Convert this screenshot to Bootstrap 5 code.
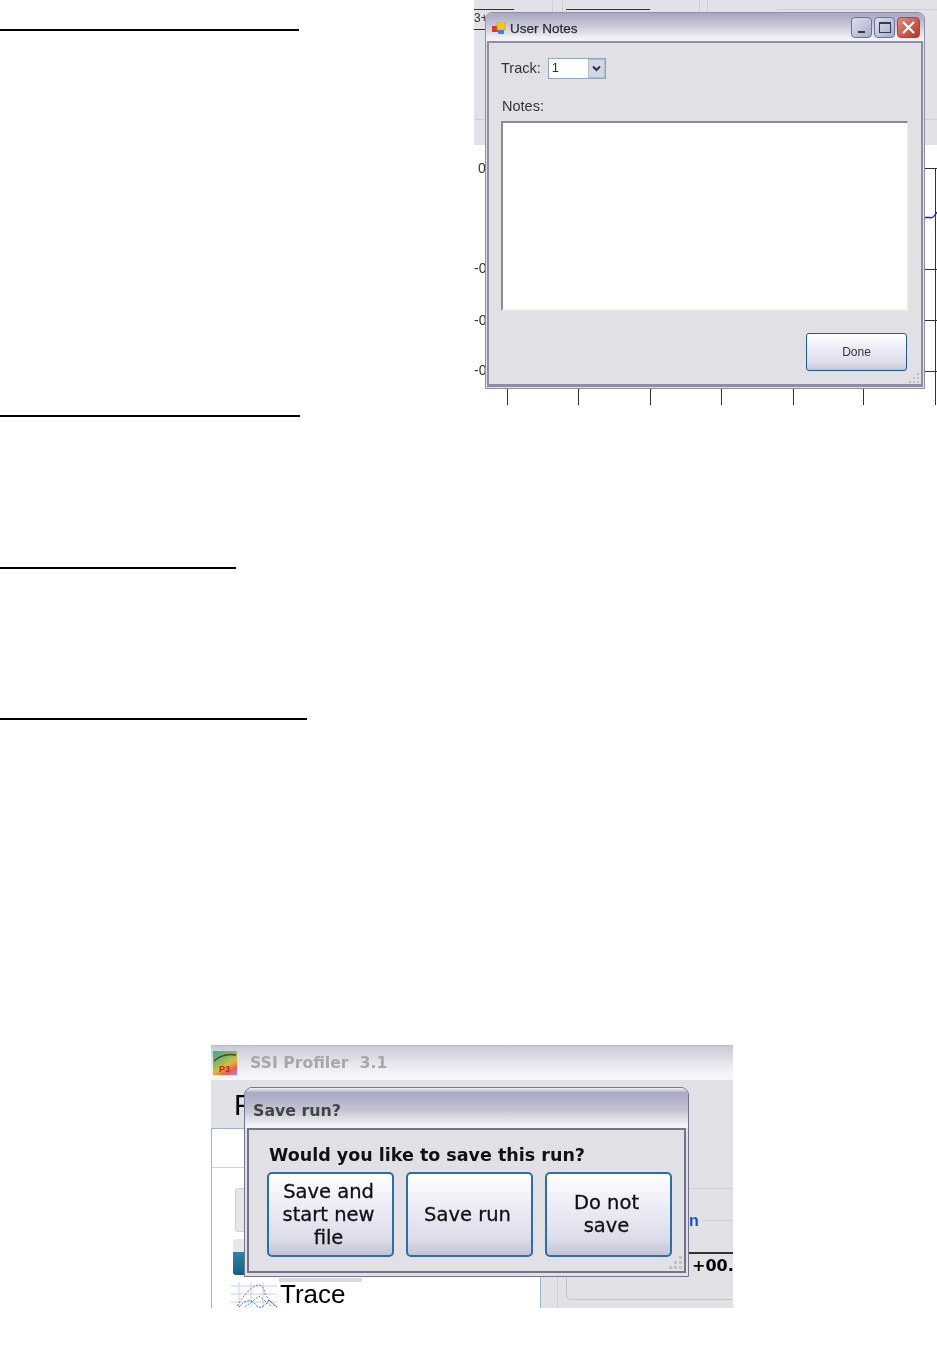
<!DOCTYPE html>
<html lang="en">
<head>
  <meta charset="UTF-8">
  <meta name="viewport" content="width=device-width, initial-scale=1">
  <title>SSI Profiler notes</title>
  <link href="https://cdn.jsdelivr.net/npm/bootstrap@5.3.0/dist/css/bootstrap.min.css" rel="stylesheet">
  <style>
    body { margin: 0; background: #fff; color: #000; font-family: "Liberation Sans", Arial, sans-serif; }
    .doc-page { width: 937px; height: 1358px; overflow: hidden; }
    .rule-line { height: 2px; background: #000; }
    .rule-one { width: 299px; margin-top: 29px; }
    .rule-two { width: 300px; margin-top: 384px; }
    .rule-three { width: 236px; margin-top: 150px; }
    .rule-four { width: 307px; margin-top: 149px; }
    .left-col { width: 474px; }

    /* top screenshot */
    .shot-top { width: 463px; height: 405px; position: relative; overflow: hidden; background: #fff; filter: blur(0.3px); }
    .shot-bg { position: absolute; left: 0; top: 0; right: 0; height: 145px; background: #e1e1e7; }
    .bit { position: absolute; }
    .bit-light { background: #cfcfd6; }
    .bit-dark { background: #333; }
    .axis-num { position: absolute; font-size: 14px; line-height: 16px; color: #333; }
    .win-notes { position: absolute; left: 11px; top: 12px; width: 440px; height: 377px; border-radius: 7px 7px 0 0; border: 1px solid #8f8fa6; background: #e0e0e5; }
    .win-title { height: 28px; background: linear-gradient(#a7a7c1, #c8c8d8 45%, #f3f3f7 92%); border-radius: 6px 6px 0 0; padding-left: 6px; }
    .win-icon { margin-top: 4px; }
    .win-title-text { font-size: 13.5px; color: #2a2a33; -webkit-text-stroke: 0.25px #2a2a33; margin-left: 4px; margin-top: 4px; }
    .win-client { height: 346px; margin: 0 1px; border: 2px solid #8d8da5; border-bottom-width: 3px; position: relative; font-size: 14.5px; color: #333; padding: 15px 12px 0 12px; }
    .track-select { width: 58px; height: 21px; border: 1px solid #8fa8c4; background: #fff; margin-left: 7px; font-size: 13px; line-height: 17px; padding-left: 3px; position: relative; }
    .track-arrow { position: absolute; right: 0; top: 0; bottom: 0; width: 17px; background: #d4d6e4; border: 1px solid #b4bcc9; display: flex; align-items: center; justify-content: center; }
    .notes-label { margin-top: 18px; margin-left: 1px; line-height: 17px; margin-bottom: 6px; }
    .notes-area { width: 407px; height: 190px; background: #fff; border: 2px solid; border-color: #8c8c8c #f2f1e6 #f2f1e6 #8c8c8c; border-right-width: 1px; }
    .xp-btn { background: linear-gradient(#fff, #eeeef8 35%, #dcdde9 80%, #c4c4d7); border: 1px solid #1d5b8e; border-radius: 3px; color: #111; padding: 0; }
    .xp-btn:hover { background: linear-gradient(#fff, #eeeef8 35%, #dcdde9 80%, #c4c4d7); color: #111; border-color: #1d5b8e; }
    .done-btn { position: absolute; right: 14px; bottom: 13px; width: 101px; height: 38px; font-size: 12px; color: #333; }
    .cap-btn { width: 21px; height: 21px; border-radius: 4px; border: 1px solid #6f7397; background: linear-gradient(135deg, #dfe0ec, #a8acc8); margin-left: 2px; position: relative; }
    .cap-close { width: 23px; background: linear-gradient(135deg, #e6887e, #b8322c); border-color: #a44; }
    .cap-min { position: absolute; left: 6px; bottom: 4px; width: 7px; height: 2px; background: #333a55; }
    .cap-max { position: absolute; left: 4px; top: 4px; width: 12px; height: 11px; border: 1px solid #333a55; border-top-width: 2px; }
    .grip { position: absolute; right: 1px; bottom: 0; }

    /* bottom screenshot */
    .shot-bottom { width: 522px; height: 263px; margin-left: 211px; margin-top: 325px; position: relative; overflow: hidden; background: #e1e1e6; filter: blur(0.35px); }
    .app-title { height: 35px; background: linear-gradient(#c9c9d9, #dedee8 35%, #f6f6f9 85%); border-top: 1px solid #b9b9cf; padding-left: 2px; }
    .app-title-text { margin-left: 13px; font-family: "DejaVu Sans", sans-serif; font-weight: 700; font-size: 15.7px; color: #a8a8a8; }
    .app-menu { height: 48px; font-size: 29px; padding-left: 23px; padding-top: 5px; line-height: 40px; }
    .app-body { height: 180px; }
    .app-left { width: 329px; background: #fff; border-left: 1px solid #9db4cf; border-top: 1px solid #9db4cf; position: relative; }
    .app-right { flex: 1; position: relative; border-left: 1px solid #9db4cf; }
    .trace-label { position: absolute; left: 68px; top: 153px; font-size: 26px; line-height: 25px; }
    .dlg { position: absolute; left: 33px; top: 42px; width: 445px; height: 190px; border: 1px solid #74748e; border-radius: 8px 8px 0 0; background: #e0e0e5; }
    .dlg-title { height: 40px; background: linear-gradient(#f2f2f5, #a9a9c2 12%, #c4c4d4 55%, #f4f4f7 95%); border-radius: 7px 7px 0 0; padding: 12px 0 0 8px; font-family: "DejaVu Sans", sans-serif; font-size: 15.8px; line-height: 22px; font-weight: 700; color: #444; }
    .dlg-client { height: 145px; margin: 0 2px; border: 2px solid #73738c; padding: 13px 13px 0 21px; position: relative; font-family: "DejaVu Sans", sans-serif; }
    .dlg-question { font-size: 17.5px; line-height: 24px; font-weight: 700; color: #111; margin-left: -1px; margin-bottom: 5px; white-space: nowrap; }
    .dlg-btn { width: 127px; height: 85px; flex-shrink: 0; font-size: 19.5px; line-height: 23px; padding: 0 4px 1px 0; border-width: 2px; border-radius: 5px; border-color: #2f6ea3; -webkit-text-stroke: 0.3px #111; }
    .dlg-grid { gap: 12px; margin-left: -3px; }
  </style>
</head>
<body>
<div class="doc-page">
  <div class="d-flex">
    <div class="left-col">
      <div class="rule-line rule-one"></div>
      <div class="rule-line rule-two"></div>
    </div>

    <div class="shot-top">
      <div class="shot-bg"></div>
      <div class="bit bit-light" style="left:78px;top:0;width:1px;height:12px"></div>
      <div class="bit bit-light" style="left:88px;top:0;width:1px;height:12px"></div>
      <div class="bit bit-light" style="left:225px;top:0;width:1px;height:12px"></div>
      <div class="bit bit-light" style="left:233px;top:0;width:1px;height:12px"></div>
      <div class="bit bit-light" style="left:303px;top:9px;width:160px;height:1px"></div>
      <div class="bit bit-light" style="left:0;top:119px;width:12px;height:1px"></div>
      <div class="bit bit-light" style="left:450px;top:119px;width:13px;height:1px"></div>
      <div class="bit bit-dark" style="left:0;top:9px;width:40px;height:1px"></div>
      <div class="bit bit-dark" style="left:92px;top:9px;width:84px;height:1px"></div>
      <div class="bit bit-dark" style="left:0;top:29px;width:12px;height:1px"></div>
      <div class="axis-num" style="left:0;top:10px;font-size:12px">3+</div>

      <div class="axis-num" style="left:4px;top:160px">0</div>
      <div class="axis-num" style="left:0;top:260px">-0</div>
      <div class="axis-num" style="left:0;top:312px">-0</div>
      <div class="axis-num" style="left:0;top:362px">-0</div>

      <div class="bit bit-dark" style="left:451px;top:168px;width:12px;height:1px"></div>
      <div class="bit bit-dark" style="left:451px;top:269px;width:12px;height:1px"></div>
      <div class="bit bit-dark" style="left:451px;top:320px;width:12px;height:1px"></div>
      <div class="bit bit-dark" style="left:451px;top:371px;width:12px;height:1px"></div>
      <div class="bit bit-dark" style="left:461px;top:168px;width:1px;height:237px"></div>
      <svg class="bit" style="left:451px;top:208px" width="12" height="14" viewBox="0 0 12 14"><path d="M0 9.5H5Q8 11 12 4" fill="none" stroke="#1a1ae0" stroke-width="1.4"/></svg>

      <div class="bit bit-dark" style="left:33px;top:388px;width:1px;height:17px"></div>
      <div class="bit bit-dark" style="left:104px;top:388px;width:1px;height:17px"></div>
      <div class="bit bit-dark" style="left:176px;top:388px;width:1px;height:17px"></div>
      <div class="bit bit-dark" style="left:247px;top:388px;width:1px;height:17px"></div>
      <div class="bit bit-dark" style="left:319px;top:388px;width:1px;height:17px"></div>
      <div class="bit bit-dark" style="left:389px;top:388px;width:1px;height:17px"></div>

      <div class="win-notes">
        <div class="win-title d-flex align-items-center">
          <svg class="win-icon" width="14" height="14" viewBox="0 0 14 14">
            <rect x="0" y="4" width="6" height="6" fill="#d8382e"/>
            <rect x="5" y="0" width="8" height="8" fill="#f4c430" stroke="#b98f1c" stroke-width=".5"/>
            <rect x="6" y="8" width="6" height="4" fill="#4a80dc"/>
          </svg>
          <span class="win-title-text">User Notes</span>
          <div class="d-flex ms-auto me-1">
            <div class="cap-btn"><div class="cap-min"></div></div>
            <div class="cap-btn"><div class="cap-max"></div></div>
            <div class="cap-btn cap-close">
              <svg class="d-block" width="21" height="19" viewBox="0 0 21 19"><path d="M5 4L16 15M16 4L5 15" stroke="#fff" stroke-width="2.2"/></svg>
            </div>
          </div>
        </div>
        <div class="win-client">
          <div class="d-flex align-items-center">
            <span>Track:</span>
            <div class="track-select">1
              <div class="track-arrow">
                <svg width="9" height="7" viewBox="0 0 9 7"><path d="M1 1.5L4.500 5L8 1.500" fill="none" stroke="#26304d" stroke-width="2"/></svg>
              </div>
            </div>
          </div>
          <div class="notes-label">Notes:</div>
          <div class="notes-area"></div>
          <button type="button" class="btn xp-btn done-btn">Done</button>
          <svg class="grip" width="12" height="12" viewBox="0 0 12 12" fill="#bdbdb5"><rect x="9" y="1" width="2" height="2"/><rect x="5" y="5" width="2" height="2"/><rect x="9" y="5" width="2" height="2"/><rect x="1" y="9" width="2" height="2"/><rect x="5" y="9" width="2" height="2"/><rect x="9" y="9" width="2" height="2"/></svg>
        </div>
      </div>
    </div>
  </div>

  <div class="rule-line rule-three"></div>
  <div class="rule-line rule-four"></div>

  <div class="shot-bottom">
    <div class="app-title d-flex align-items-center">
      <svg width="24" height="24" viewBox="0 0 24 24">
        <defs>
          <linearGradient id="p3Fill" x1="0.2" y1="0" x2="0.8" y2="1">
            <stop offset="0" stop-color="#4fa88c"/><stop offset=".35" stop-color="#7cc05a"/><stop offset=".6" stop-color="#e0b83c"/><stop offset=".85" stop-color="#e8604c"/><stop offset="1" stop-color="#c878b8"/>
          </linearGradient>
        </defs>
        <rect width="24" height="24" fill="url(#p3Fill)"/>
        <path d="M1 10Q10 2 23 4" fill="none" stroke="#5b3a2c" stroke-width="1.500"/>
        <text x="6" y="21" font-family="Liberation Sans" font-size="9" font-weight="700" fill="#c0202a">P3</text>
      </svg>
      <span class="app-title-text">SSI Profiler&nbsp; 3.1</span>
    </div>
    <div class="app-menu">F</div>
    <div class="app-body d-flex">
      <div class="app-left">
        <div class="bit bit-light" style="left:0;top:38px;width:328px;height:1px"></div>
        <div class="bit" style="left:23px;top:59px;width:12px;height:44px;background:#e6e6e8;border:1px solid #d0d0d4;border-radius:3px"></div>
        <div class="bit" style="left:21px;top:110px;width:16px;height:36px;background:linear-gradient(#e8e8ea 35%,#2a86a8 35%,#14607e);border-radius:3px"></div>
        <div class="bit" style="left:67px;top:149px;width:83px;height:4px;background:#dcdce0"></div>
        <svg class="bit" style="left:19px;top:153px" width="47" height="26" viewBox="0 0 47 26">
          <path d="M0 4H46M0 12H46M0 20H46M8 0V26M20 0V26M32 0V26" stroke="#bcd6ee" fill="none"/>
          <path d="M6 24Q16 8 24 4T34 12Q40 22 46 25" fill="none" stroke="#e0403c" stroke-dasharray="2 1.500"/>
          <path d="M8 25Q18 14 24 22T38 18L46 25" fill="none" stroke="#3a4fd8" stroke-dasharray="2 1.500"/>
          <path d="M14 25L28 14L40 24" fill="none" stroke="#3aa64a" stroke-dasharray="2 1.500"/>
        </svg>
        <div class="trace-label">Trace</div>
      </div>
      <div class="app-right">
        <div class="bit bit-light" style="left:16px;top:0;width:1px;height:180px"></div>
        <div class="bit bit-light" style="left:148px;top:60px;width:46px;height:1px"></div>
        <div class="bit" style="left:148px;top:83px;font-size:16px;line-height:20px;font-weight:700;color:#1450e0">n</div>
        <div class="bit bit-light" style="left:162px;top:92px;width:32px;height:1px"></div>
        <div class="bit bit-dark" style="left:148px;top:124px;width:46px;height:2px"></div>
        <div class="bit" style="left:151px;top:127px;font-family:'DejaVu Sans',sans-serif;font-size:16px;line-height:22px;font-weight:700">+00.</div>
        <div class="bit" style="left:25px;top:146px;width:172px;height:26px;border:1px solid #c4c4ca;border-top:0;border-right:0;border-radius:0 0 0 5px"></div>
      </div>
    </div>

    <div class="dlg">
      <div class="dlg-title">Save run?</div>
      <div class="dlg-client">
        <div class="dlg-question">Would you like to save this run?</div>
        <div class="d-flex dlg-grid">
          <button type="button" class="btn xp-btn dlg-btn">Save and<br>start new<br>file</button>
          <button type="button" class="btn xp-btn dlg-btn">Save run</button>
          <button type="button" class="btn xp-btn dlg-btn">Do not<br>save</button>
        </div>
        <svg class="grip" width="16" height="16" viewBox="0 0 16 16" fill="#c4c4ba"><rect x="12" y="1" width="3" height="3"/><rect x="7" y="6" width="3" height="3"/><rect x="12" y="6" width="3" height="3"/><rect x="2" y="11" width="3" height="3"/><rect x="7" y="11" width="3" height="3"/><rect x="12" y="11" width="3" height="3"/></svg>
      </div>
    </div>
  </div>
</div>
<script src="https://cdn.jsdelivr.net/npm/bootstrap@5.3.0/dist/js/bootstrap.bundle.min.js"></script>
</body>
</html>
